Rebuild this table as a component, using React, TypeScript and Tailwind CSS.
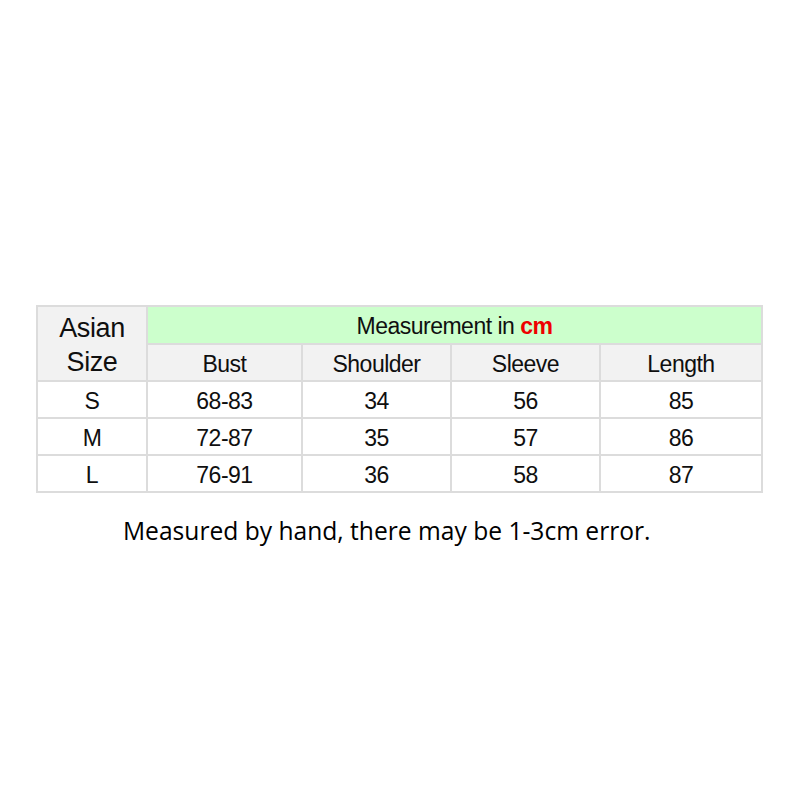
const rows = [
  { size: "S", bust: "68-83", shoulder: "34", sleeve: "56", length: "85" },
  { size: "M", bust: "72-87", shoulder: "35", sleeve: "57", length: "86" },
  { size: "L", bust: "76-91", shoulder: "36", sleeve: "58", length: "87" },
];

const cell =
  "border-2 border-[#dcdcdc] p-0 pt-[2px] leading-[24px] text-center align-middle";

const App = () => {
  return (
    <div className="h-[800px] w-[800px] bg-white pt-[305px]">
      <table
        className="ml-[36px] w-[725px] table-fixed border-collapse text-[23px] tracking-[-0.5px] text-[#0f0f0f]"
        style={{ fontFamily: '"Liberation Sans", Arial, sans-serif' }}
      >
        <colgroup>
          <col className="w-[110px]" />
          <col className="w-[155px]" />
          <col className="w-[149px]" />
          <col className="w-[149px]" />
          <col className="w-[162px]" />
        </colgroup>
        <thead>
          <tr className="h-[38px]">
            <th
              rowSpan={2}
              className={`${cell} bg-[#f2f2f2] text-[27px] !leading-[34px] font-normal tracking-[-0.4px]`}
            >
              Asian
              <br />
              Size
            </th>
            <th colSpan={4} className={`${cell} bg-[#ccffcc] font-normal`}>
              Measurement in{" "}
              <span className="font-bold text-[#ee0000]">cm</span>
            </th>
          </tr>
          <tr className="h-[37px] bg-[#f2f2f2]">
            <th className={`${cell} font-normal`}>Bust</th>
            <th className={`${cell} font-normal`}>Shoulder</th>
            <th className={`${cell} font-normal`}>Sleeve</th>
            <th className={`${cell} font-normal`}>Length</th>
          </tr>
        </thead>
        <tbody>
          {rows.map((r) => (
            <tr key={r.size} className="h-[37px]">
              <td className={cell}>{r.size}</td>
              <td className={cell}>{r.bust}</td>
              <td className={cell}>{r.shoulder}</td>
              <td className={cell}>{r.sleeve}</td>
              <td className={cell}>{r.length}</td>
            </tr>
          ))}
        </tbody>
      </table>
      <p
        className="mt-[20px] pl-[123px] text-[24.6px] text-black"
        style={{ fontFamily: '"Open Sans", "Noto Sans", sans-serif' }}
      >
        Measured by hand, there may be 1-3cm error.
      </p>
    </div>
  );
};

export default App;
